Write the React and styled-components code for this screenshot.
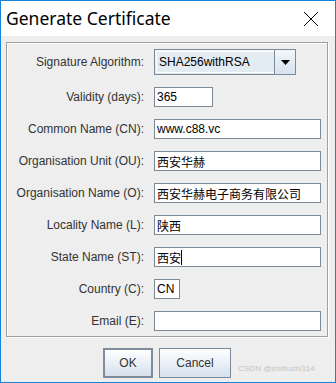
import { Fragment } from "react";
import styled, { createGlobalStyle } from "styled-components";

const GlobalStyle = createGlobalStyle`
  html, body {
    margin: 0;
    padding: 0;
    background: #eeeeee;
  }
`;

const Window = styled.div`
  position: relative;
  width: 336px;
  height: 383px;
  box-sizing: border-box;
  border: 1px solid #1883d7;
  background: #eeeeee;
  display: flex;
  flex-direction: column;
  font-family: "Liberation Sans", Arial, sans-serif;
`;

const TitleBar = styled.div`
  height: 35px;
  background: #ffffff;
  display: flex;
  align-items: center;
  justify-content: space-between;
  padding: 0 16px 0 5px;
`;

const Title = styled.div`
  font-family: "Noto Sans", "Open Sans", sans-serif;
  font-size: 17.5px;
  color: #000;
  padding-bottom: 1px;
`;

const Body = styled.div`
  flex: 1;
  display: flex;
  flex-direction: column;
  padding: 6px 5px 0 5px;
`;

const Panel = styled.div`
  width: 322px;
  box-sizing: border-box;
  border: 1px solid #a0a0a0;
  box-shadow: inset 1px 1px 0 #ffffff, 1px 1px 0 #ffffff;
  padding: 6px 6px 5px 1px;
  display: grid;
  grid-template-columns: 136px 1fr;
  column-gap: 10px;
  row-gap: 12px;
  align-items: center;
`;

const Label = styled.label`
  text-align: right;
  font-size: 12px;
  color: #333333;
`;

const Field = styled.div`
  width: ${(p) => p.$width || "100%"};
  height: 20px;
  box-sizing: border-box;
  border: 1px solid #7a8a99;
  background: #ffffff;
  font-size: 12px;
  color: #000;
  padding: 0 2px;
  display: flex;
  align-items: center;
  font-family: "Liberation Sans", "Noto Sans CJK SC", sans-serif;
  white-space: nowrap;
  overflow: hidden;
`;

const Caret = styled.span`
  display: inline-block;
  width: 1px;
  height: 15px;
  background: #000;
`;

const Combo = styled.div`
  width: 142px;
  height: 26px;
  box-sizing: border-box;
  border: 1px solid #7a8a99;
  background: linear-gradient(to bottom, #f4f8fb 0%, #e4ecf4 45%, #d8e3ee 100%);
  display: flex;
  align-items: stretch;
`;

const ComboValue = styled.div`
  flex: 1;
  margin: 1px 0 1px 1px;
  padding-left: 2px;
  background: #e3ebf3;
  border: 1px solid #ffffff;
  border-right: none;
  display: flex;
  align-items: center;
  font-size: 12px;
  color: #000;
`;

const ArrowButton = styled.div`
  width: 20px;
  border-left: 1px solid #7a8a99;
  display: flex;
  align-items: center;
  justify-content: center;
`;

const Footer = styled.div`
  flex: 1;
  display: flex;
  justify-content: center;
  align-items: flex-start;
  gap: 6px;
  padding-top: 11px;
  padding-right: 2px;
`;

const Button = styled.button`
  height: 30px;
  width: ${(p) => p.$width};
  box-sizing: border-box;
  border: ${(p) => (p.$default ? "2px solid #7e8c9b" : "1px solid #7a8a99")};
  background: linear-gradient(to bottom, #ffffff 0%, #eef3f8 40%, #d5e1ed 100%);
  font-family: "Liberation Sans", Arial, sans-serif;
  font-size: 12px;
  color: #333333;
  padding: 0;
  border-radius: 0;
`;

const Watermark = styled.div`
  position: absolute;
  left: 237px;
  bottom: 9px;
  font-family: "Liberation Sans", Arial, sans-serif;
  font-size: 8px;
  color: #c4c4c4;
  letter-spacing: 0.1px;
`;

function CloseIcon() {
  return (
    <svg width="16" height="16" viewBox="0 0 16 16">
      <path d="M1 1 L15 15 M15 1 L1 15" stroke="#000" strokeWidth="1" fill="none" />
    </svg>
  );
}

function ArrowDown() {
  return (
    <svg width="9" height="5" viewBox="0 0 9 5">
      <path d="M0 0 H9 L4.5 5 Z" fill="#000" />
    </svg>
  );
}

const rows = [
  { label: "Common Name (CN):", value: "www.c88.vc" },
  { label: "Organisation Unit (OU):", value: "西安华赫" },
  { label: "Organisation Name (O):", value: "西安华赫电子商务有限公司" },
  { label: "Locality Name (L):", value: "陕西" },
  { label: "State Name (ST):", value: "西安", caret: true },
  { label: "Country (C):", value: "CN", width: "26px" },
  { label: "Email (E):", value: "" },
];

export default function App() {
  return (
    <>
      <GlobalStyle />
      <Window>
        <TitleBar>
          <Title>Generate Certificate</Title>
          <CloseIcon />
        </TitleBar>
        <Body>
          <Panel>
            <Label>Signature Algorithm:</Label>
            <Combo>
              <ComboValue>SHA256withRSA</ComboValue>
              <ArrowButton>
                <ArrowDown />
              </ArrowButton>
            </Combo>
            <Label>Validity (days):</Label>
            <Field $width="59px">365</Field>
            {rows.map((r) => (
              <Fragment key={r.label}>
                <Label>{r.label}</Label>
                <Field $width={r.width}>
                  {r.value}
                  {r.caret && <Caret />}
                </Field>
              </Fragment>
            ))}
          </Panel>
          <Footer>
            <Button $default $width="50px">OK</Button>
            <Button $width="72px">Cancel</Button>
          </Footer>
        </Body>
        <Watermark>CSDN @shibushi114</Watermark>
      </Window>
    </>
  );
}
